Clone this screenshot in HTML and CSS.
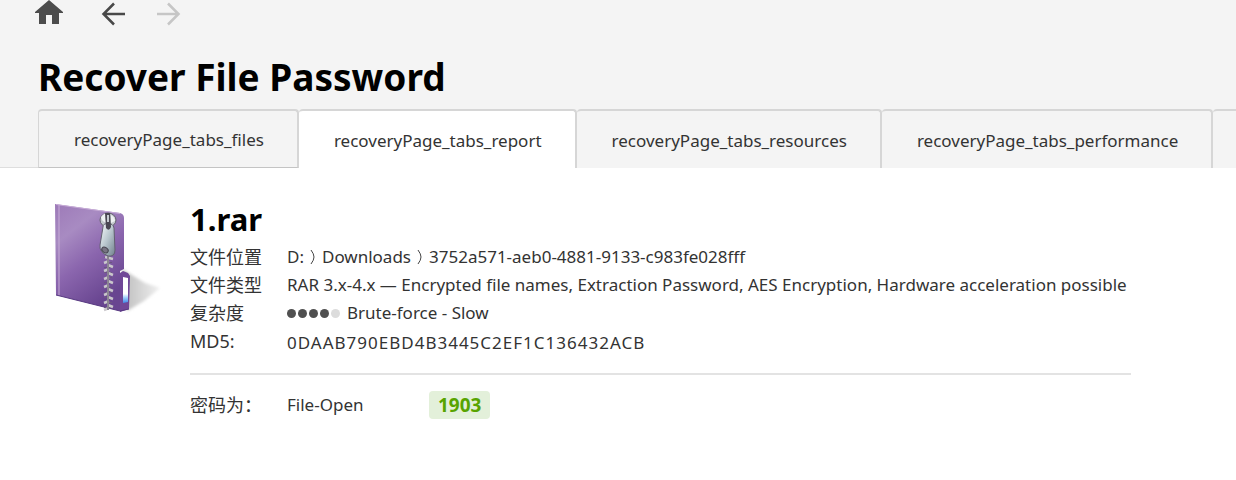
FILE: index.html
```
<!DOCTYPE html>
<html lang="en">
<head>
<meta charset="utf-8">
<title>Recover File Password</title>
<link rel="stylesheet" href="styles.css">
</head>
<body>
<header class="header">
  <nav class="toolbar" aria-label="History">
    <button class="tool" type="button" aria-label="Home">
      <svg width="28" height="26" viewBox="0 0 28 26"><path fill="#4c4c4c" d="M14 0 28 12V13H24V24H17V15H11V24H4V13H0V12Z"/></svg>
    </button>
    <button class="tool" type="button" aria-label="Back">
      <svg width="24" height="26" viewBox="0 0 24 26"><path fill="none" stroke="#484848" stroke-width="2.5" d="M13 3.500 2.500 14 13 24.500M2.500 14H24"/></svg>
    </button>
    <button class="tool" type="button" aria-label="Forward" disabled>
      <svg width="24" height="26" viewBox="0 0 24 26"><path fill="none" stroke="#c6c6c6" stroke-width="2.500" d="M11 3.500 21.500 14 11 24.500M21.500 14H0"/></svg>
    </button>
  </nav>
  <h1 class="title">Recover File Password</h1>
  <div class="tabs" role="tablist">
    <button class="tab tab-first" type="button" role="tab">recoveryPage_tabs_files</button>
    <button class="tab tab-active" type="button" role="tab" aria-selected="true">recoveryPage_tabs_report</button>
    <button class="tab" type="button" role="tab">recoveryPage_tabs_resources</button>
    <button class="tab" type="button" role="tab">recoveryPage_tabs_performance</button>
    <button class="tab tab-rest" type="button" role="tab" aria-label="More"></button>
  </div>
</header>
<main class="report">
  <svg class="archive" width="110" height="112" viewBox="0 0 110 112" aria-hidden="true">
    <defs>
      <linearGradient id="cover" x1="0" y1="0" x2="0.500" y2="1">
        <stop offset="0" stop-color="#9d7ab8"/><stop offset="0.300" stop-color="#a88bc2"/><stop offset="0.600" stop-color="#8b66ae"/><stop offset="1" stop-color="#684590"/>
      </linearGradient>
      <linearGradient id="shade" x1="0" y1="0" x2="1" y2="0">
        <stop offset="0" stop-color="#bcbcbc"/><stop offset="1" stop-color="#f0f0f0"/>
      </linearGradient>
      <linearGradient id="pull" x1="0" y1="0" x2="1" y2="1">
        <stop offset="0" stop-color="#fafcfd"/><stop offset="0.500" stop-color="#b7c5cc"/><stop offset="1" stop-color="#71808d"/>
      </linearGradient>
      <linearGradient id="page" x1="0" y1="0" x2="0" y2="1">
        <stop offset="0.650" stop-color="#fff"/><stop offset="0.800" stop-color="#9ccbfa"/><stop offset="1" stop-color="#3f88e8"/>
      </linearGradient>
      <filter id="soft" x="-20%" y="-20%" width="140%" height="140%"><feGaussianBlur stdDeviation="1.500"/></filter>
    </defs>
    <path filter="url(#soft)" fill="url(#shade)" d="M68 66 91 80 106 85 90 98 73 108Z"/>
    <path fill="#704797" d="M66 70 69 68 74 70 76 73 75 106 66 109Z"/>
    <path fill="url(#page)" d="M69 74 74 75V99L69 100Z"/>
    <path fill="url(#cover)" d="M1 1 66 10Q70 11 70 15V66L66 68V108L2 92Z"/>
    <path fill="none" stroke="#c7acd7" d="M2 1.500 66 10.500M5 2V92"/>
    <path fill="none" stroke="#573881" d="M2 92 66 108 75 106"/>
    <path fill="none" stroke="#6b5580" stroke-width="8" stroke-dasharray="1 4" d="M54 54V108"/>
    <path fill="none" stroke="#c9c6cb" stroke-width="2.500" d="M51 54 59 56M50 60 55 58M54 62 59 64M50 68 55 66M54 70 59 72M50 76 55 74M54 78 59 80M50 84 55 82M54 86 59 88M50 92 55 90M54 94 59 96M50 100 55 98M54 102 59 104M50 107 55 105"/>
    <path fill="none" stroke="#8c8692" stroke-width="2" d="M54 53V107"/>
    <ellipse cx="54" cy="17" rx="8" ry="7" fill="#c3c9cd" stroke="#65616f"/>
    <path fill="#eef1f2" d="M47 14Q50 10 53 10V19Q48 20 47 14M57 12Q61 14 61 18L57 20Z"/>
    <path fill="url(#pull)" stroke="#626070" d="M49 24Q49 20 54 21Q59 20 60 25L61 47Q61 54 54 53Q45 49 46 42Z"/>
    <path fill="#4a4752" d="M51 10H56L57 24Q55 29 52 25Z"/>
    <path fill="none" stroke="#c7cbd1" stroke-width="2" d="M54 12V19"/>
    <ellipse cx="51" cy="47" rx="3.500" ry="2.500" transform="rotate(35 51 47)" fill="#777482" stroke="#474450"/>
  </svg>
  <section class="details">
    <h2 class="name">1.rar</h2>
    <dl class="facts">
      <dt>文件位置</dt>
      <dd class="path">
        <span>D:</span>
        <svg width="6" height="16" viewBox="0 0 6 16" aria-hidden="true"><path fill="none" stroke="#444" d="M1 1Q4 5 4 8Q4 11 1 15"/></svg>
        <span>Downloads</span>
        <svg width="6" height="16" viewBox="0 0 6 16" aria-hidden="true"><path fill="none" stroke="#444" d="M1 1Q4 5 4 8Q4 11 1 15"/></svg>
        <span>3752a571-aeb0-4881-9133-c983fe028fff</span>
      </dd>
      <dt>文件类型</dt><dd>RAR 3.x-4.x — Encrypted file names, Extraction Password, AES Encryption, Hardware acceleration possible</dd>
      <dt>复杂度</dt><dd class="level"><span class="dots"><i class="dot"></i><i class="dot"></i><i class="dot"></i><i class="dot"></i><i class="dot dot-off"></i></span>Brute-force - Slow</dd>
      <dt>MD5:</dt><dd class="hash">0DAAB790EBD4B3445C2EF1C136432ACB</dd>
    </dl>
    <dl class="result">
      <dt>密码为：</dt><dd class="kind">File-Open</dd><dd class="password">1903</dd>
    </dl>
  </section>
</main>
</body>
</html>
```
FILE: styles.css
```
* { box-sizing: border-box; }
body {
  margin: 0;
  background: #fff;
  color: #333;
  font: 17px/28px "Noto Sans", "Noto Sans CJK SC", sans-serif;
  overflow-x: hidden;
}
button { font: inherit; color: inherit; }
h1, h2, dl, dd { margin: 0; }
.header {
  background: #f4f4f4;
  box-shadow: inset 0 -1px #dedede;
  padding-left: 38px;
  overflow: hidden;
}
.toolbar {
  display: flex;
  gap: 38px;
  margin-left: -3px;
}
.tool {
  display: flex;
  padding: 0;
  border: 0;
  background: none;
}
.tool + .tool + .tool { margin-left: -6px; }
.title {
  padding: 25px 0 6px;
  color: #000;
  font-size: 37px;
  line-height: 52px;
  font-weight: 700;
}
.tabs { display: flex; }
.tab {
  flex: none;
  height: 59px;
  padding: 2px 33px 0 35px;
  border: solid #d6d6d6;
  border-width: 2px 2px 0 0;
  border-radius: 4px 4px 0 0;
  background: #f4f4f4;
  white-space: nowrap;
}
.tab-first {
  border-left-width: 1px;
  border-bottom: 1px solid #c4c4c4;
}
.tab-active { background: #fff; }
.tab-rest { width: 120px; }
.report {
  display: flex;
  gap: 26px;
  padding: 35px 105px 40px 54px;
}
.archive { flex: none; }
.details { flex: 1; min-width: 0; }
.name {
  padding-bottom: 8px;
  color: #000;
  font-size: 31px;
  line-height: 32px;
}
.facts {
  display: grid;
  grid-template-columns: 97px 1fr;
  padding-bottom: 16px;
  border-bottom: 2px solid #e3e3e3;
}
dt { font-size: 18px; }
dd { white-space: nowrap; }
.path { display: flex; align-items: center; gap: 6px; }
.level { display: flex; gap: 7px; }
.dots { display: flex; align-items: center; gap: 2px; }
.dot {
  width: 9px;
  height: 9px;
  border-radius: 50%;
  background: #505050;
}
.dot-off { background: #dcdcdc; }
.hash { padding-top: 2px; letter-spacing: 1px; }
.result {
  display: grid;
  grid-template-columns: 97px 142px auto;
  justify-content: start;
  padding-top: 16px;
}
.password {
  padding: 0 9px;
  border-radius: 4px;
  background: #e3f0da;
  color: #58a400;
  font-size: 19px;
  font-weight: 700;
}
```
